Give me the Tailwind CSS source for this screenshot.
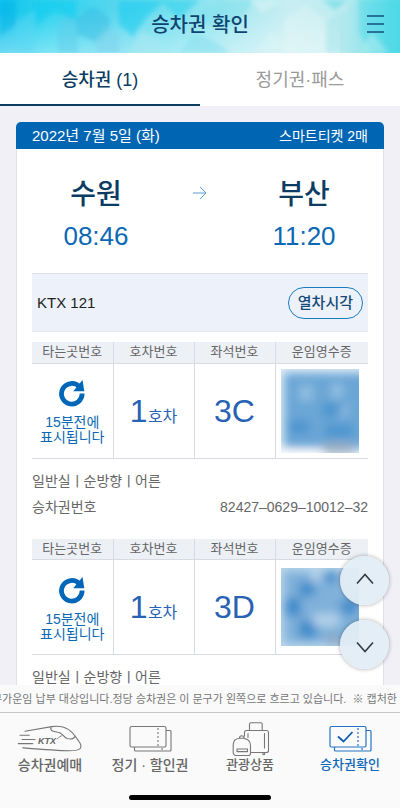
<!DOCTYPE html>
<html lang="ko">
<head>
<meta charset="utf-8">
<meta name="viewport" content="width=device-width, initial-scale=1">
<title>승차권 확인</title>
<script src="https://cdn.jsdelivr.net/npm/@tailwindcss/browser@4"></script>
</head>
<body class="flex h-dvh flex-col overflow-hidden bg-[#f0f0f6] font-['Liberation_Sans','Noto_Sans_CJK_KR',sans-serif] text-[#666]">

<header class="relative flex h-[53px] shrink-0 items-center justify-center overflow-hidden bg-[#7fe0ee] pb-[3px]">
  <svg class="absolute inset-0 size-full" viewBox="0 0 400 53" preserveAspectRatio="none" aria-hidden="true">
    <defs>
      <linearGradient id="sky" x1="0" y1="0" x2="1" y2="0">
        <stop offset="0" stop-color="#13c2ec"/><stop offset=".12" stop-color="#2dd3ef"/><stop offset=".28" stop-color="#55d6ee"/>
        <stop offset=".42" stop-color="#74dfef"/><stop offset=".58" stop-color="#a3e8f0"/><stop offset=".72" stop-color="#c8eef2"/>
        <stop offset=".86" stop-color="#bdecf0"/><stop offset=".93" stop-color="#7fe1ea"/><stop offset="1" stop-color="#4fdae6"/>
      </linearGradient>
      <linearGradient id="fade" x1="0" y1="0" x2="0" y2="1">
        <stop offset=".2" stop-color="#fff" stop-opacity="0"/><stop offset="1" stop-color="#fff" stop-opacity=".38"/>
      </linearGradient>
      <filter id="soft"><feGaussianBlur stdDeviation="2"/></filter>
    </defs>
    <rect width="400" height="53" fill="url(#sky)"/>
    <rect width="340" height="53" fill="url(#fade)"/>
    <g filter="url(#soft)">
      <path d="M33 0h43v22l-22-12-18 16z" fill="#10cdf0" opacity=".6"/>
      <path d="M0 0h16v24l-16 12z" fill="#08b4e8" opacity=".5"/>
      <path d="M76 18l17-12 17 12v12l-14 12-20-8z" fill="#35bde4" opacity=".5"/>
      <path d="M58 26l10-12 10 12v27h-20z" fill="#5cc9e8" opacity=".4"/>
      <path d="M16 24l18-14v43h-18z" fill="#5ad8f2" opacity=".4"/>
      <path d="M96 40l12-14 11 12v15h-23z" fill="#7fd4ec" opacity=".6"/>
      <path d="M119 0h46l-18 16-14 20-14-12z" fill="#0fcaf0" opacity=".55"/>
      <path d="M160 0h40l-22 18z" fill="#1fd0ee" opacity=".5"/>
      <path d="M196 14l24-14h34l-20 26h-26z" fill="#7fe0ee" opacity=".5"/>
      <path d="M128 53l14-22 18 10v12z" fill="#a8e8f2" opacity=".6"/>
      <path d="M180 53l14-20 20 8 16 12z" fill="#8adff0" opacity=".6"/>
      <path d="M250 0h30l-18 14z" fill="#e0f5f6" opacity=".5"/>
      <path d="M284 20l22-16 20 16v33h-42z" fill="#e6f5f6" opacity=".35"/>
      <path d="M256 53l14-22 14 10v12z" fill="#daf3f5" opacity=".5"/>
      <path d="M322 0h26l-13 10z" fill="#74dde8" opacity=".7"/>
      <path d="M326 20l32-16v49h-32z" fill="#a6e6ee" opacity=".5"/>
      <path d="M358 0h42v53h-26l-16-20z" fill="#45d8e6" opacity=".4"/>
      <path d="M358 53l14-20 16 20z" fill="#aaecf0" opacity=".6"/>
    </g>
  </svg>
  <h1 class="relative text-[20px] leading-6 font-medium text-[#0f4470]">승차권 확인</h1>
  <button type="button" aria-label="메뉴" class="absolute top-[15px] right-4 text-[#12507c]">
    <svg width="17" height="18" viewBox="0 0 17 18" stroke="currentColor" stroke-width="1.6" aria-hidden="true"><path d="M0 1h17M0 9h17M0 17h17"/></svg>
  </button>
</header>

<div class="grid h-[53px] shrink-0 grid-cols-2 bg-white text-[18px] leading-6" role="tablist">
  <button type="button" role="tab" aria-selected="true" class="border-b-2 border-[#0c3c62] pt-[3px] font-medium text-[#0c3c62]">승차권 (1)</button>
  <button type="button" role="tab" aria-selected="false" class="border-b-2 border-white pt-[3px] text-[#9a9a9a]">정기권·패스</button>
</div>

<div class="relative min-h-0 flex-1">
  <main class="h-full overflow-y-auto px-4 pt-4 [scrollbar-width:none]">
    <article>
      <header class="flex h-[27px] items-center justify-between rounded-t-[5px] bg-[#0066b3] px-4 leading-5 text-white">
        <h2 class="text-[15px]">2022년 7월 5일 (화)</h2>
        <p class="text-[14px]">스마트티켓 2매</p>
      </header>
      <div class="border-x border-[#e0e1e8] bg-white px-[15px]">
        <div class="grid grid-cols-[128px_1fr_128px] items-center gap-y-[3px] pt-[26px] pb-[19px] text-center">
          <p class="text-[28px] leading-10 font-medium text-[#0c3c62]">수원</p>
          <svg class="mx-auto mb-1 text-[#5a9fd4]" width="14" height="14" viewBox="0 0 14 14" fill="none" stroke="currentColor" aria-label="도착역"><path d="M0 7h13M7 1l6 6-6 6"/></svg>
          <p class="text-[28px] leading-10 font-medium text-[#0c3c62]">부산</p>
          <p class="text-[26px] leading-9 text-[#0a68b5]">08:46</p>
          <span></span>
          <p class="text-[26px] leading-9 text-[#0a68b5]">11:20</p>
        </div>
        <div class="flex h-[59px] items-center justify-between border-y border-t-[#dcdfe6] border-b-[#e6eaf0] bg-[#edf2fa] pr-[5px] pl-[5px]">
          <p class="text-[15px] leading-5 text-[#222]">KTX 121</p>
          <button type="button" class="h-8 rounded-full border border-[#1b7cbd] px-[9px] text-[15px] leading-5 font-medium text-[#134a78]">열차시각</button>
        </div>

        <section class="pt-[10px]">
          <table class="w-full table-fixed border-collapse text-center">
            <colgroup><col class="w-[81px]"><col class="w-[81px]"><col class="w-[81px]"><col></colgroup>
            <thead>
              <tr class="h-[21px] border-b border-[#d8dbe2] bg-[#edf1f6] text-[13px] leading-5">
                <th class="border-r border-[#d8dbe2] p-0 font-normal">타는곳번호</th>
                <th class="border-r border-[#d8dbe2] p-0 font-normal">호차번호</th>
                <th class="border-r border-[#d8dbe2] p-0 font-normal">좌석번호</th>
                <th class="p-0 font-normal">운임영수증</th>
              </tr>
            </thead>
            <tbody>
              <tr class="h-[95px] border-b border-[#d8dbe2] text-[#2862b4]">
                <td class="border-r border-[#d8dbe2] p-0 pt-[3px] text-[14px] leading-[15px] text-[#0a68b5]">
                  <svg class="mx-auto mb-2" width="28" height="28" viewBox="0 0 28 28" aria-label="새로고침"><path d="M21.3 7.700A10.300 10.300 0 1 0 24.100 14.500" fill="none" stroke="#0066b8" stroke-width="4.800"/><path d="M24.500 1l1.800 11.200H15.200z" fill="#0066b8"/></svg>
                  15분전에<br>표시됩니다
                </td>
                <td class="border-r border-[#d8dbe2] p-0"><span class="text-[32px] leading-9">1</span> <span class="-ml-1 text-[16px]">호차</span></td>
                <td class="border-r border-[#d8dbe2] p-0 text-[32px] leading-9">3C</td>
                <td class="p-0 pl-[5px]">
                  <svg class="block" width="78" height="84" viewBox="0 0 78 84" role="img" aria-label="운임영수증 QR 코드">
                    <defs><filter id="b1" x="-20%" y="-20%" width="140%" height="140%"><feGaussianBlur stdDeviation="5"/></filter></defs>
                    <rect width="78" height="84" fill="#e0edf7"/>
                    <g filter="url(#b1)">
                      <rect x="3" y="4" width="84" height="75" fill="#6ba6d6"/>
                      <path d="M-5 81h48v10H-5z" fill="#fff"/>
                      <path d="M18 16h14v16H18zM50 14h12v16H50z" fill="#8fbde0"/>
                      <path d="M42 34h20v14H42zM44 56h28v12H44zM8 52h20v12H8z" fill="#4c94ce"/>
                      <path d="M64 34l-8 14 12-4z" fill="#9cc5e4"/>
                      <path d="M42 74h30v10H42z" fill="#9daec0"/>
                    </g>
                  </svg>
                </td>
              </tr>
            </tbody>
          </table>
          <div class="pt-3 text-[14px] leading-5">
            <p>일반실ㅣ순방향ㅣ어른</p>
            <dl class="mt-[6px] flex justify-between"><dt>승차권번호</dt><dd>82427–0629–10012–32</dd></dl>
          </div>
        </section>

        <section class="pt-[22px] pb-8">
          <table class="w-full table-fixed border-collapse text-center">
            <colgroup><col class="w-[81px]"><col class="w-[81px]"><col class="w-[81px]"><col></colgroup>
            <thead>
              <tr class="h-[21px] border-b border-[#d8dbe2] bg-[#edf1f6] text-[13px] leading-5">
                <th class="border-r border-[#d8dbe2] p-0 font-normal">타는곳번호</th>
                <th class="border-r border-[#d8dbe2] p-0 font-normal">호차번호</th>
                <th class="border-r border-[#d8dbe2] p-0 font-normal">좌석번호</th>
                <th class="p-0 font-normal">운임영수증</th>
              </tr>
            </thead>
            <tbody>
              <tr class="h-[95px] border-b border-[#d8dbe2] text-[#2862b4]">
                <td class="border-r border-[#d8dbe2] p-0 pt-[3px] text-[14px] leading-[15px] text-[#0a68b5]">
                  <svg class="mx-auto mb-2" width="28" height="28" viewBox="0 0 28 28" aria-label="새로고침"><path d="M21.3 7.700A10.300 10.300 0 1 0 24.100 14.500" fill="none" stroke="#0066b8" stroke-width="4.800"/><path d="M24.500 1l1.800 11.200H15.200z" fill="#0066b8"/></svg>
                  15분전에<br>표시됩니다
                </td>
                <td class="border-r border-[#d8dbe2] p-0"><span class="text-[32px] leading-9">1</span> <span class="-ml-1 text-[16px]">호차</span></td>
                <td class="border-r border-[#d8dbe2] p-0 text-[32px] leading-9">3D</td>
                <td class="p-0 pl-[5px]">
                  <svg class="block" width="78" height="78" viewBox="0 0 78 78" role="img" aria-label="운임영수증 QR 코드">
                    <rect width="78" height="78" fill="#bcd7ec"/>
                    <g filter="url(#b1)">
                      <rect x="3" y="3" width="85" height="72" fill="#7fb1da"/>
                      <path d="M4 30h16v18H4zM18 14h16v14H18zM18 52h18v18H18zM44 4h12v10H44zM60 32h16v14H60z" fill="#3f8bca"/>
                      <path d="M32 46h26v12H32zM30 2h10v12H30zM62 -4h20v26H62z" fill="#b4d1ea"/>
                      <path d="M46 66h12v12H46z" fill="#90a9c6"/>
                    </g>
                  </svg>
                </td>
              </tr>
            </tbody>
          </table>
          <div class="pt-3 text-[14px] leading-5">
            <p>일반실ㅣ순방향ㅣ어른</p>
          </div>
        </section>
      </div>
    </article>
  </main>

  <div class="absolute right-[11px] bottom-4 flex flex-col gap-[15px] text-[#333b45]">
    <button type="button" aria-label="위로" class="grid size-[49px] place-items-center rounded-full bg-[#e2edf6]/95 pb-1 shadow-[0_0_4px_rgba(0,0,0,0.35)]">
      <svg width="18" height="12" viewBox="0 0 18 12" fill="none" stroke="currentColor" stroke-width="1.6" aria-hidden="true"><path d="M1 10.5 9 1.5l8 9"/></svg>
    </button>
    <button type="button" aria-label="아래로" class="grid size-[49px] place-items-center rounded-full bg-[#e2edf6]/95 pt-1 shadow-[0_0_4px_rgba(0,0,0,0.35)]">
      <svg width="18" height="12" viewBox="0 0 18 12" fill="none" stroke="currentColor" stroke-width="1.6" aria-hidden="true"><path d="M1 1.5l8 9 8-9"/></svg>
    </button>
  </div>
</div>

<div class="flex h-[27px] shrink-0 items-center overflow-hidden bg-[#fafafa]">
  <p class="-ml-2 text-[11px] leading-4 whitespace-nowrap text-[#777]">부가운임 납부 대상입니다.정당 승차권은 이 문구가 왼쪽으로 흐르고 있습니다. &nbsp;※ 캡처한 승차권</p>
</div>

<footer class="flex h-24 shrink-0 flex-col items-center justify-between border-t border-[#c6c6c8] bg-[#fafafa] pt-[9px] pb-2">
  <nav class="grid w-full grid-cols-4 leading-[18px] font-medium">
    <a href="#" class="flex flex-col items-center text-[14px]">
      <svg width="66" height="34" viewBox="0 0 66 34" fill="none" stroke="#777" stroke-width="1.1" stroke-linecap="round" stroke-linejoin="round" aria-hidden="true">
        <path d="M8 9.3 34.7 4.6Q40 3.6 46 5C54 7 59 15 63 21C66 27 62 28.7 52 28.7C40 28.7 20 27 5.7 25.8M34 4.8C33 9 36 9.5 40 10C46 10.5 46 15 50 16.5C54 17.5 57 17 58 14M3 13.3h9.3M5 17.5h13M1.3 21.6h14.4"/>
        <path d="M40 17q2-2.500 5-3.400" stroke-width=".8"/>
        <text x="21" y="22" fill="#666" stroke="none" font-size="9" font-weight="700" font-style="italic">KTX</text>
      </svg>
      승차권예매
    </a>
    <a href="#" class="flex flex-col items-center text-[14px]">
      <svg width="43" height="34" viewBox="0 0 43 34" fill="none" stroke="#777" stroke-width="1.1" aria-hidden="true">
        <rect x="1" y="4.500" width="36" height="20.500" rx="1.500"/>
        <path d="M5.500 25v3q0 1 1 1h34.500q1 0 1-1V9.500q0-1-1-1h-4"/>
        <path d="M29 6v19M33 26v3" stroke-dasharray="2 2"/>
      </svg>
      정기 · 할인권
    </a>
    <a href="#" class="flex flex-col items-center text-[13px]">
      <svg width="39" height="34" viewBox="0 0 39 34" fill="none" stroke="#777" stroke-width="1.1" stroke-linecap="round" stroke-linejoin="round" aria-hidden="true">
        <path d="M18.500 8V2q0-1.300 1.300-1.300h10.100q1.300 0 1.300 1.300v6"/>
        <path d="M13.500 14v-3.500q0-2 2-2h20q2 0 2 2v18q0 2-2 2H20.500M17 11.500v4M33.500 11.500v14.500M32 31v1.500h1.500V31"/>
        <path d="M3 32.500q-.8-.5-.8-2V23q0-6.300 6.500-6.800h3.300q7.500.6 7.500 7.300v8q0 2-2 2H5q-1.500 0-2-1zM8.500 16q0-2.300 2.300-2.300T13 16"/>
        <rect x="6" y="27" width="10.500" height="2.600"/>
      </svg>
      관광상품
    </a>
    <a href="#" aria-current="page" class="flex flex-col items-center text-[13px] text-[#0d68b8]">
      <svg width="43" height="34" viewBox="0 0 43 34" fill="none" stroke="#2573c2" stroke-width="1.200" aria-hidden="true">
        <rect x="1" y="4.500" width="36" height="20.500" rx="1.500"/>
        <path d="M5.500 25v3q0 1 1 1h34.500q1 0 1-1V9.500q0-1-1-1h-4"/>
        <path d="M29 6v19M33 26v3" stroke-dasharray="2 2"/>
        <path d="M9 14.500l5.500 5 9-9.500" stroke="#0d5fb0" stroke-width="1.800"/>
      </svg>
      승차권확인
    </a>
  </nav>
  <div class="h-[5px] w-[142px] rounded-full bg-black"></div>
</footer>
</body>
</html>
